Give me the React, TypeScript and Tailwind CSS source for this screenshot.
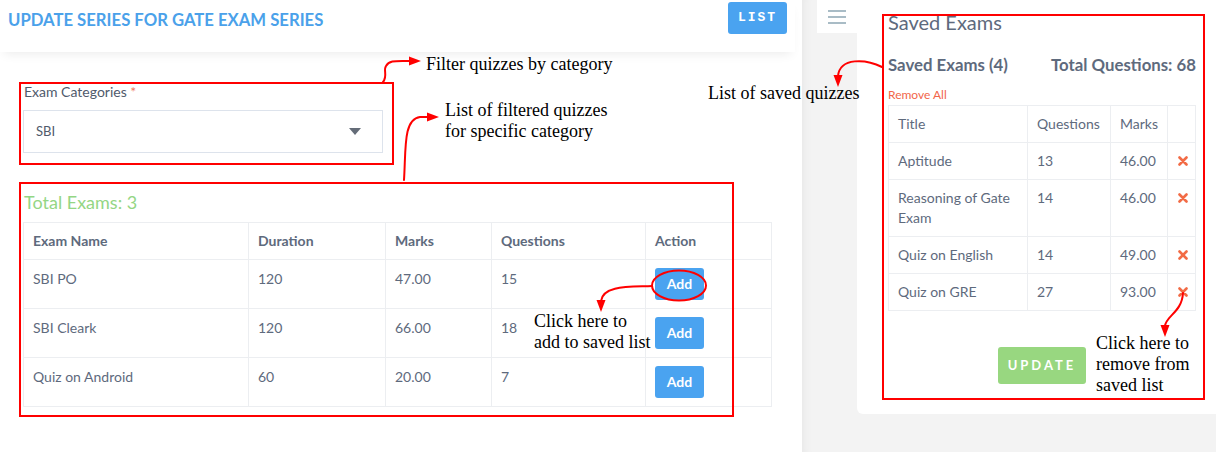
import React from 'react';

const exams = [
  { name: "SBI PO", duration: 120, marks: "47.00", questions: 15 },
  { name: "SBI Cleark", duration: 120, marks: "66.00", questions: 18 },
  { name: "Quiz on Android", duration: 60, marks: "20.00", questions: 7 },
];

const saved = [
  { title: "Aptitude", questions: 13, marks: "46.00" },
  { title: "Reasoning of Gate Exam", questions: 14, marks: "46.00" },
  { title: "Quiz on English", questions: 14, marks: "49.00" },
  { title: "Quiz on GRE", questions: 27, marks: "93.00" },
];

function RemoveIcon() {
  return (
    <svg width="10" height="10" viewBox="0 0 10 10" className="mt-[5px]">
      <path d="M1.5 1.5L8.5 8.5M8.5 1.5L1.5 8.5" stroke="#f26b45" strokeWidth="2.6" strokeLinecap="round" />
    </svg>
  );
}

function Notes() {
  return (
    <>
      {/* red frames */}
      <div className="pointer-events-none absolute left-[19px] top-[82px] h-[83px] w-[375px] border-2 border-[#ff0000]" />
      <div className="pointer-events-none absolute left-[19px] top-[182px] h-[235px] w-[715px] border-2 border-[#ff0000]" />
      <div className="pointer-events-none absolute left-[882px] top-[14px] h-[386px] w-[323px] border-2 border-[#ff0000]" />

      <svg className="pointer-events-none absolute inset-0" width="1216" height="452" viewBox="0 0 1216 452" fill="none">
        <g stroke="#ff0000" strokeWidth="2" strokeLinecap="round">
          <path d="M383 82 C388 76 383 70 386 66 C389 60 396 61 410 61" />
          <path d="M404 180 C406 150 403 119 420 117 L428 117" />
          <path d="M882 67 C866 59 840 57 838 76" />
          <ellipse cx="679" cy="285.5" rx="27" ry="15" />
          <path d="M652 286 C630 287 603 285 601 301" />
          <path d="M1183 293 C1182 312 1166 316 1165 326" />
        </g>
        <g fill="#ff0000">
          <polygon points="421,61 409,56.5 409,65.5" />
          <polygon points="439,117 427,112.5 427,121.5" />
          <polygon points="838,87 833.5,75 842.5,75" />
          <polygon points="601,312 596.5,300 605.5,300" />
          <polygon points="1165,337 1160.5,325 1169.5,325" />
        </g>
      </svg>

      <div className="absolute inset-0 font-['Liberation_Serif',serif] text-[18px] leading-[21px] text-black">
        <p className="absolute left-[426px] top-[54px]">Filter quizzes by category</p>
        <p className="absolute left-[445px] top-[100px]">
          List of filtered quizzes
          <br />
          for specific category
        </p>
        <p className="absolute left-[708px] top-[83px]">List of saved quizzes</p>
        <p className="absolute left-[534px] top-[311px]">
          Click here to
          <br />
          add to saved list
        </p>
        <p className="absolute left-[1096px] top-[333px]">
          Click here to
          <br />
          remove from
          <br />
          saved list
        </p>
      </div>
    </>
  );
}

export default function App() {
  return (
    <div className="relative flex h-[452px] w-[1216px] overflow-hidden bg-white font-['Lato',sans-serif] text-[#5e6a7d]">
      {/* main column */}
      <div className="w-[802px] shrink-0 bg-white">
        <div className="flex h-[52px] w-[795px] items-start justify-between bg-white px-2 shadow-[0_6px_10px_-4px_rgba(0,0,0,0.08)]">
          <h1 className="pt-2 text-[16.7px] font-bold leading-[24px] text-[#4aa1ea]">UPDATE SERIES FOR GATE EXAM SERIES</h1>
          <button className="mt-[2px] h-[32px] w-[59px] rounded-[3px] bg-[#4aa3f0] font-['Liberation_Mono',monospace] text-[13px] font-bold tracking-[2px] text-white">
            LIST
          </button>
        </div>

        <div className="pl-[23px]">
          <label className="mt-[30px] block pl-px text-[14px] leading-[20px] text-[#4f5a6b]">
            Exam Categories <span className="text-[#ef7a5e]">*</span>
          </label>
          <div className="mt-2 flex h-[43px] w-[360px] items-center justify-between border border-[#dde3ec] pl-3 pr-[21px] text-[13px] text-[#4f5a6b]">
            <span>SBI</span>
            <svg width="12" height="7" viewBox="0 0 12 7">
              <polygon points="0,0 12,0 6,7" fill="#646c78" />
            </svg>
          </div>

          <h2 className="mt-[37px] pl-px text-[18px] leading-[24px] text-[#94d684]">Total Exams: 3</h2>

          <table className="mt-2 w-[748px] table-fixed border-collapse text-[14px] leading-[20px]">
            <colgroup>
              <col className="w-[225px]" />
              <col className="w-[137px]" />
              <col className="w-[106px]" />
              <col className="w-[154px]" />
              <col className="w-[126px]" />
            </colgroup>
            <thead>
              <tr>
                {["Exam Name", "Duration", "Marks", "Questions", "Action"].map((h) => (
                  <th key={h} className="border border-[#eceef1] px-[9px] py-2 text-left font-bold">
                    {h}
                  </th>
                ))}
              </tr>
            </thead>
            <tbody>
              {exams.map((e) => (
                <tr key={e.name}>
                  <td className="border border-[#eceef1] px-[9px] pb-2 pt-[9px] align-top">{e.name}</td>
                  <td className="border border-[#eceef1] px-[9px] pb-2 pt-[9px] align-top">{e.duration}</td>
                  <td className="border border-[#eceef1] px-[9px] pb-2 pt-[9px] align-top">{e.marks}</td>
                  <td className="border border-[#eceef1] px-[9px] pb-2 pt-[9px] align-top">{e.questions}</td>
                  <td className="border border-[#eceef1] px-[9px] pb-2 pt-[8px] align-top">
                    <button className="h-[32px] w-[49px] rounded-[3px] bg-[#4aa3f0] text-[14px] font-bold text-white">Add</button>
                  </td>
                </tr>
              ))}
            </tbody>
          </table>
        </div>
      </div>

      {/* side column */}
      <div className="flex flex-1 items-start bg-[#f3f3f3] shadow-[inset_10px_0_10px_-8px_rgba(0,0,0,0.05)]">
        <div className="ml-[15px] flex h-[33px] w-[40px] flex-col items-center justify-center gap-[4px] bg-white">
          <span className="h-[2px] w-[18px] bg-[#a9bcc6]" />
          <span className="h-[2px] w-[18px] bg-[#a9bcc6]" />
          <span className="h-[2px] w-[18px] bg-[#a9bcc6]" />
        </div>

        <div className="h-[414px] flex-1 rounded-bl-md bg-white pl-[31px] pr-[20px]">
          <h2 className="pt-2 text-[20px] leading-[28px] text-[#5e6a7d]">Saved Exams</h2>
          <div className="mt-[18px] flex justify-between text-[16.8px] font-bold leading-[22px]">
            <span>Saved Exams (4)</span>
            <span>Total Questions: 68</span>
          </div>
          <button className="mt-[11px] block text-[12px] leading-[16px] text-[#f2664a]">Remove All</button>

          <table className="mt-[2px] w-[307px] table-fixed border-collapse text-[14px] leading-[20px]">
            <colgroup>
              <col className="w-[139px]" />
              <col className="w-[83px]" />
              <col className="w-[57px]" />
              <col className="w-[28px]" />
            </colgroup>
            <thead>
              <tr>
                <th className="border border-[#eceef1] px-[9px] py-2 text-left font-normal">Title</th>
                <th className="border border-[#eceef1] px-[9px] py-2 text-left font-normal">Questions</th>
                <th className="border border-[#eceef1] px-[9px] py-2 text-left font-normal">Marks</th>
                <th className="border border-[#eceef1]" />
              </tr>
            </thead>
            <tbody>
              {saved.map((s) => (
                <tr key={s.title}>
                  <td className="border border-[#eceef1] px-[9px] py-2 align-top">{s.title}</td>
                  <td className="border border-[#eceef1] px-[9px] py-2 align-top">{s.questions}</td>
                  <td className="border border-[#eceef1] px-[9px] py-2 align-top">{s.marks}</td>
                  <td className="border border-[#eceef1] py-2 pl-[10px] align-top">
                    <RemoveIcon />
                  </td>
                </tr>
              ))}
            </tbody>
          </table>

          <div className="mt-9 flex justify-center">
            <button className="h-[37px] w-[88px] rounded-[3px] bg-[#98d780] text-[13px] font-bold tracking-[3px] text-white">
              UPDATE
            </button>
          </div>
        </div>
      </div>

      <Notes />
    </div>
  );
}
